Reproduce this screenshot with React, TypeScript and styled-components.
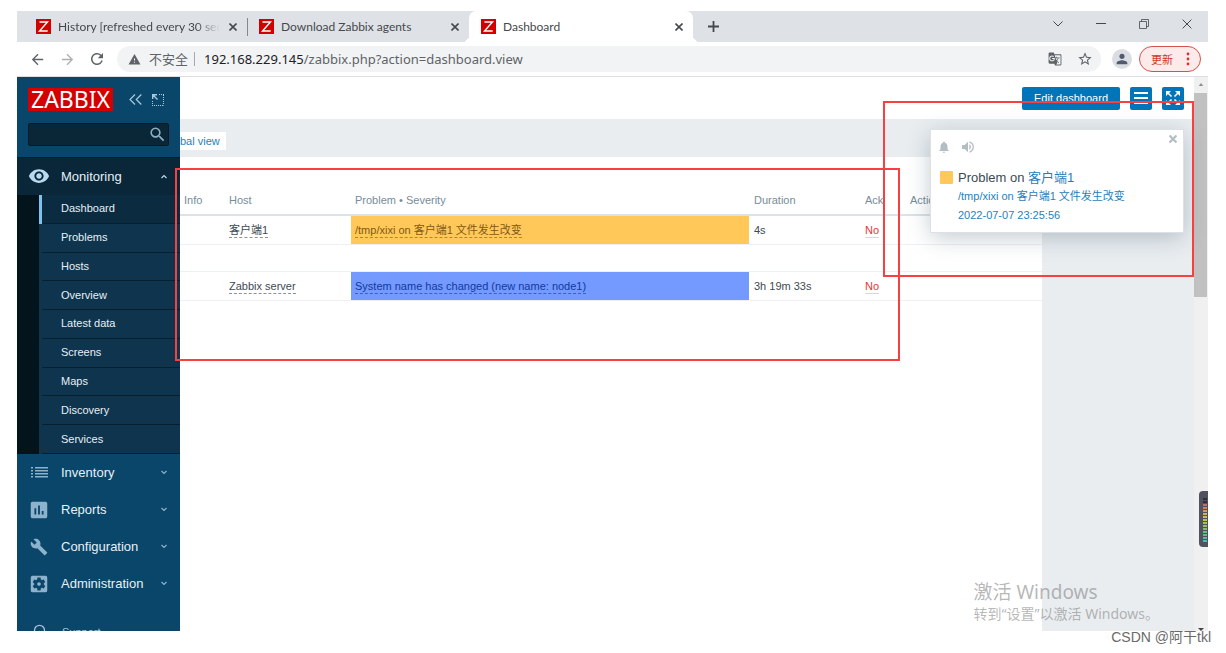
import React from "react";
import styled, { createGlobalStyle, css } from "styled-components";
import {
  MdArrowBack,
  MdArrowForward,
  MdAssessment,
  MdBuild,
  MdGTranslate,
  MdHeadset,
  MdNotifications,
  MdPerson,
  MdRefresh,
  MdSearch,
  MdSettingsApplications,
  MdStarBorder,
  MdVisibility,
  MdVolumeUp,
  MdWarning,
} from "react-icons/md";

const ui = `"Liberation Sans", "Noto Sans CJK SC", sans-serif`;
const chrome = `"Noto Sans", "Noto Sans CJK SC", sans-serif`;
const tabFont = `Lato, "Noto Sans CJK SC", sans-serif`;

const GlobalStyle = createGlobalStyle`
  *, *::before, *::after { box-sizing: border-box; }
  body { margin: 0; background: #fff; font-family: ${ui}; font-size: 11px; color: #3c4a52; }
  button { border: 0; padding: 0; background: none; font: inherit; color: inherit; cursor: pointer; }
  a { color: inherit; text-decoration: none; }
  svg { display: block; flex: none; }
  ul { list-style: none; margin: 0; padding: 0; }
`;

const Page = styled.div`
  position: relative;
  display: flex;
  flex-direction: column;
  height: 100vh;
  padding: 11px 18px 0 17px;
  overflow: hidden;
`;

/* Browser tab strip */
const TabStrip = styled.div`
  display: flex;
  align-items: stretch;
  height: 31px;
  flex: none;
  background: #dee1e6;
  font-family: ${tabFont};
  font-size: 12px;
  color: #45494d;
`;

const Tab = styled.div<{ $active?: boolean; $divider?: boolean }>`
  position: relative;
  display: flex;
  align-items: center;
  gap: 7px;
  width: 222px;
  padding: 0 8px 0 12px;
  ${(p) =>
    p.$active &&
    css`
      width: 224px;
      background: #fff;
      border-radius: 7px 7px 0 0;
      &::before,
      &::after {
        content: "";
        position: absolute;
        bottom: 0;
        width: 7px;
        height: 7px;
      }
      &::before {
        left: -7px;
        background: radial-gradient(circle at 0 0, transparent 7px, #fff 7px);
      }
      &::after {
        right: -7px;
        background: radial-gradient(circle at 100% 0, transparent 7px, #fff 7px);
      }
    `}
  ${(p) =>
    p.$divider &&
    css`
      width: 230px;
      padding-left: 19px;
      &::after {
        content: "";
        position: absolute;
        right: -1px;
        top: 7px;
        width: 1px;
        height: 18px;
        background: #85888c;
      }
    `}
`;

const TabTitle = styled.span<{ $fade?: boolean }>`
  flex: 1;
  overflow: hidden;
  white-space: nowrap;
  line-height: 18px;
  ${(p) => p.$fade && css`mask-image: linear-gradient(to right, #000 85%, transparent);`}
`;

const TabClose = styled.button`
  display: grid;
  place-items: center;
  width: 12px;
  height: 12px;
`;

const NewTab = styled.button`
  display: grid;
  place-items: center;
  width: 40px;
`;

const WindowControls = styled.div`
  display: flex;
  margin-left: auto;
  height: 26px;
`;

const WindowButton = styled.button`
  display: grid;
  place-items: center;
  width: 43px;
`;

/* Address bar */
const Toolbar = styled.div`
  display: flex;
  align-items: center;
  height: 35px;
  flex: none;
  padding: 0 7px 0 12px;
  border-bottom: 1px solid #dcdee1;
  color: #5f6368;
`;

const NavButton = styled.button<{ $dim?: boolean }>`
  display: grid;
  place-items: center;
  width: 30px;
  height: 26px;
  opacity: ${(p) => (p.$dim ? 0.5 : 1)};
  &:first-child {
    width: 16px;
    margin: 0 7px 0 0;
  }
`;

const Omnibox = styled.div`
  display: flex;
  align-items: center;
  flex: 1;
  height: 26px;
  margin-left: 5px;
  padding: 0 1px 0 11px;
  border-radius: 13px;
  background: #f1f3f4;
  font-family: ${chrome};
  font-size: 13px;
`;

const Insecure = styled.span`
  display: flex;
  align-items: center;
  gap: 8px;
  padding-right: 6px;
  border-right: 1px solid #a6a9ac;
  line-height: 14px;
`;

const Address = styled.div`
  flex: 1;
  margin-left: 9px;
  white-space: nowrap;
  outline: none;
  b {
    font-weight: 400;
    color: #202124;
  }
`;

const OmniAction = styled.button`
  display: grid;
  place-items: center;
  width: 30px;
  height: 24px;
`;

const Avatar = styled.button`
  display: grid;
  place-items: center;
  width: 20px;
  height: 20px;
  margin: 0 7px 0 11px;
  border-radius: 50%;
  background: #dadde2;
  color: #515b70;
`;

const UpdateButton = styled.button`
  display: flex;
  align-items: center;
  justify-content: space-between;
  width: 62px;
  height: 26px;
  padding: 0 10px 0 11px;
  border: 1px solid #d5504a;
  border-radius: 13px;
  background: #fcebea;
  color: #d2352d;
  font-size: 11px;
`;

/* Zabbix frame */
const Viewport = styled.div`
  position: relative;
  display: flex;
  flex: 1;
  min-height: 0;
  overflow: hidden;
`;

const Sidebar = styled.aside`
  width: 163px;
  flex: none;
  overflow: hidden;
  background: #0a466a;
  color: #e6f0f6;
`;

const Brand = styled.div`
  display: flex;
  align-items: center;
  padding: 11px 11px 0;
  color: #a9c9dd;
`;

const Logo = styled.a`
  flex: none;
  width: 85px;
  height: 23px;
  margin-right: 16px;
  background: #d40000;
  color: #fff;
  font-family: "Noto Sans", sans-serif;
  font-size: 23px;
  line-height: 23px;
  text-align: center;
`;

const BrandButton = styled.button`
  margin-right: 10px;
`;

const SearchBox = styled.form`
  display: flex;
  align-items: center;
  height: 23px;
  margin: 12px 11px 11px;
  padding-right: 1px;
  border: 1px solid #061a26;
  border-radius: 2px;
  background: #0a2738;
  color: #8fb0c4;
`;

const SearchInput = styled.input`
  flex: 1;
  min-width: 0;
  padding: 0 6px;
  border: 0;
  outline: none;
  background: transparent;
  color: #fff;
  font: inherit;
`;

const MenuHeader = styled.button<{ $open?: boolean }>`
  display: grid;
  grid-template-columns: 44px 1fr 32px;
  align-items: center;
  width: 100%;
  height: ${(p) => (p.$open ? 38 : 37)}px;
  font-size: 13px;
  text-align: left;
  background: ${(p) => (p.$open ? "#092738" : "transparent")};
  box-shadow: ${(p) => (p.$open ? "inset 0 1px 0 #051c2a" : "none")};
  & > svg {
    justify-self: center;
    color: ${(p) => (p.$open ? "#b9d9ee" : "#8db2cb")};
  }
`;

const SubMenu = styled.ul`
  display: grid;
  grid-auto-rows: 1fr;
  height: 259px;
  padding-left: 22px;
  background: #04141d;
`;

const SubLink = styled.a<{ $active?: boolean }>`
  display: flex;
  align-items: center;
  height: 100%;
  padding: 0 0 2px 19px;
  border-left: 3px solid ${(p) => (p.$active ? "#7cc3f2" : "#0f344e")};
  background: ${(p) => (p.$active ? "#0b2b40" : "#0f344e")};
  box-shadow: inset 0 -1px 0 #07202f;
`;

const Support = styled.a`
  display: grid;
  grid-template-columns: 45px 1fr;
  align-items: center;
  margin-top: 22px;
  font-size: 11px;
  color: #a9c6d8;
  & > svg {
    justify-self: center;
  }
`;

const Main = styled.main`
  display: flex;
  flex-direction: column;
  flex: 1;
  min-width: 0;
  background: #e9edf0;
`;

const MainHeader = styled.header`
  display: flex;
  align-items: center;
  justify-content: flex-end;
  gap: 10px;
  height: 42px;
  padding-right: 10px;
  background: #fff;
`;

const BlueButton = styled.button<{ $wide?: boolean }>`
  display: grid;
  place-items: center;
  width: ${(p) => (p.$wide ? 98 : 22)}px;
  height: 23px;
  border-radius: 2px;
  background: #0275b8;
  color: #fff;
`;

const ViewBar = styled.nav`
  display: flex;
  align-items: center;
  height: 38px;
  padding-top: 6px;
`;

const ViewLink = styled.a`
  padding: 0 6px 0 0;
  background: #fff;
  color: #1f7fbd;
  line-height: 18px;
`;

const Widget = styled.section`
  flex: 1;
  margin-right: 152px;
  padding-top: 29px;
  background: #fff;
`;

const ProblemTable = styled.table`
  width: 100%;
  table-layout: fixed;
  border-collapse: separate;
  border-spacing: 0;
`;

const Th = styled.th<{ $w?: number }>`
  width: ${(p) => (p.$w ? `${p.$w}px` : "auto")};
  height: 30px;
  padding: 0 4px;
  border-bottom: 2px solid #dce2e5;
  color: #768d99;
  font-weight: 400;
  text-align: left;
`;

const Td = styled.td<{ $severity?: "warning" | "info" }>`
  height: 29px;
  padding: 0 4px;
  border-bottom: 1px solid #edf1f3;
  ${(p) =>
    p.$severity === "warning" &&
    css`
      background: #ffc859;
      border-right: 1px solid #fff;
      color: #805a10;
    `}
  ${(p) =>
    p.$severity === "info" &&
    css`
      background: #7499ff;
      border-right: 1px solid #fff;
      color: #123a9e;
    `}
`;

const GapCell = styled(Td)`
  height: 27px;
`;

const MenuLink = styled.a`
  display: inline-block;
  line-height: 14px;
  border-bottom: 1px dashed color-mix(in srgb, currentColor 60%, transparent);
`;

const AckLink = styled.a`
  display: inline-block;
  line-height: 14px;
  color: #e33734;
  border-bottom: 1px solid #d3d9dc;
`;

const ScrollTrack = styled.div`
  display: flex;
  flex-direction: column;
  justify-content: space-between;
  width: 14px;
  flex: none;
  background: #f0f0f0;
`;

const ScrollThumb = styled.div`
  width: 13px;
  height: 204px;
  margin-top: 7px;
  background: #c1c1c1;
`;

/* Notification over the dashboard */
const Notice = styled.div`
  position: absolute;
  top: 53px;
  right: 25px;
  width: 252px;
  height: 102px;
  padding: 9px 6px 0 6px;
  background: #fff;
  box-shadow: 0 0 0 1px #dbe1e5, 0 5px 22px rgba(30, 60, 80, 0.28);
`;

const NoticeBar = styled.div`
  display: flex;
  align-items: center;
  gap: 9px;
  color: #b3bec4;
`;

const NoticeClose = styled.button`
  align-self: flex-start;
  margin-left: auto;
  margin-top: -4px;
`;

const NoticeBody = styled.div`
  display: grid;
  grid-template-columns: 13px 1fr;
  column-gap: 5px;
  padding: 14px 0 0 3px;
`;

const Swatch = styled.span`
  width: 13px;
  height: 13px;
  margin-top: 2px;
  border-radius: 1px;
  background: #ffc859;
`;

const NoticeText = styled.div`
  color: #1f7fbd;
  line-height: 19px;
  white-space: nowrap;
  a {
    display: block;
  }
  h4 {
    margin: 0;
    color: #3c4a52;
    font-size: 13px;
    font-weight: 400;
    line-height: 18px;
  }
  h4 a {
    display: inline;
    color: #1f7fbd;
  }
`;

const LevelMeter = styled.div`
  position: absolute;
  right: 0;
  top: 414px;
  width: 9px;
  height: 56px;
  padding: 7px 1px 0 4px;
  border-radius: 4px 0 0 4px;
  background: #50535f;
`;

const Watermark = styled.div`
  position: absolute;
  right: 49px;
  bottom: 7px;
  font-family: ${chrome};
  font-size: 14px;
  line-height: 20px;
  color: rgba(130, 130, 130, 0.58);
  white-space: nowrap;
  strong {
    display: block;
    font-weight: 400;
    font-size: 19px;
    line-height: 24px;
  }
`;

const Marker = styled.div<{ $region: "table" | "notice" }>`
  position: absolute;
  pointer-events: none;
  border: 2px solid #f93f3f;
  ${(p) =>
    p.$region === "table"
      ? css`
          left: 175px;
          right: 326px;
          top: 168px;
          height: 193px;
        `
      : css`
          right: 32px;
          width: 311px;
          top: 101px;
          height: 176px;
        `}
`;

const Credit = styled.footer`
  flex: none;
  height: 22px;
  margin-right: -3px;
  font-size: 14px;
  line-height: 12px;
  text-align: right;
  color: #6a6a6a;
`;

const Favicon = () => (
  <svg width="15" height="15" viewBox="0 0 15 15">
    <rect width="15" height="15" fill="#d40000" />
    <path d="M3.5 3h8L3.5 12h8.2" fill="none" stroke="#fff" strokeWidth="1.4" />
  </svg>
);

const Cross = ({ size = 8, weight = 1.6 }: { size?: number; weight?: number }) => (
  <svg width={size} height={size} viewBox="0 0 8 8" fill="none" stroke="currentColor" strokeWidth={weight}>
    <path d="M.5.5l7 7M7.5.5l-7 7" />
  </svg>
);

const Chevron = ({ up }: { up?: boolean }) => (
  <svg width="6" height="5" viewBox="0 0 6 5" fill="none" stroke="currentColor" strokeWidth="1.2">
    <path d={up ? "M.5 4L3 1.500 5.500 4" : "M.5 1L3 3.500 5.500 1"} />
  </svg>
);

const ListIcon = () => (
  <svg width="17" height="11" viewBox="0 0 17 11" fill="currentColor">
    {[0, 3, 6, 9].map((y) => (
      <path key={y} d={`M0 ${y}h2v1.500H0zM4 ${y}h13v1.500H4z`} />
    ))}
  </svg>
);

const Arrow = ({ down }: { down?: boolean }) => (
  <svg width="14" height="9" viewBox="0 0 14 9">
    <path d={down ? "M4 6h6L7 9z" : "M4 10h6L7 6z"} fill={down ? "#444" : "#8f8f8f"} />
  </svg>
);

const levelColors = [
  "#2e313b", "#2e313b", "#d06a60", "#d4805a", "#d89a54", "#d8b350", "#cfc04e", "#bcc44e",
  "#a6c550", "#92c455", "#7fc262", "#6cc178", "#5bc08e", "#4cc0a4", "#42c0b8",
];

const LevelBars = () => (
  <svg width="4" height="44" viewBox="0 0 4 44">
    {levelColors.map((c, i) => (
      <rect key={i} y={i * 3} width="4" height="2" fill={c} />
    ))}
  </svg>
);

const submenu = ["Dashboard", "Problems", "Hosts", "Overview", "Latest data", "Screens", "Maps", "Discovery", "Services"];

const sections = [
  { label: "Inventory", icon: <ListIcon /> },
  { label: "Reports", icon: <MdAssessment size={22} /> },
  { label: "Configuration", icon: <MdBuild size={18} /> },
  { label: "Administration", icon: <MdSettingsApplications size={22} /> },
];

const tabs = [
  { title: "History [refreshed every 30 sec", divider: true },
  { title: "Download Zabbix agents" },
  { title: "Dashboard", active: true },
];

export default function App() {
  return (
    <Page>
      <GlobalStyle />
      <TabStrip>
        {tabs.map((t) => (
          <Tab key={t.title} $active={t.active} $divider={t.divider}>
            <Favicon />
            <TabTitle $fade={t.divider}>{t.title}</TabTitle>
            <TabClose aria-label="Close tab">
              <Cross />
            </TabClose>
          </Tab>
        ))}
        <NewTab aria-label="New tab">
          <svg width="11" height="11" viewBox="0 0 11 11" stroke="currentColor" strokeWidth="1.8">
            <path d="M5.5 0v11M0 5.5h11" />
          </svg>
        </NewTab>
        <WindowControls>
          <WindowButton aria-label="Search tabs">
            <svg width="10" height="6" viewBox="0 0 10 6" fill="none" stroke="currentColor">
              <path d="M.5.5L5 5 9.5.5" />
            </svg>
          </WindowButton>
          <WindowButton aria-label="Minimize">
            <svg width="10" height="2" viewBox="0 0 10 2" fill="currentColor">
              <path d="M0 0h10v1H0z" />
            </svg>
          </WindowButton>
          <WindowButton aria-label="Restore">
            <svg width="10" height="10" viewBox="0 0 10 10" fill="none" stroke="currentColor">
              <path d="M.5 2.5h7v7h-7zM2.500 2.500v-2h7v7h-2" strokeWidth=".8" />
            </svg>
          </WindowButton>
          <WindowButton aria-label="Close">
            <Cross size={10} weight={0.8} />
          </WindowButton>
        </WindowControls>
      </TabStrip>

      <Toolbar>
        <NavButton aria-label="Back">
          <MdArrowBack size={17} />
        </NavButton>
        <NavButton aria-label="Forward" $dim>
          <MdArrowForward size={17} />
        </NavButton>
        <NavButton aria-label="Reload">
          <MdRefresh size={18} />
        </NavButton>
        <Omnibox>
          <Insecure>
            <MdWarning size={13} />
            不安全
          </Insecure>
          <Address role="textbox" aria-label="Address" contentEditable suppressContentEditableWarning spellCheck={false}>
            <b>192.168.229.145</b>/zabbix.php?action=dashboard.view
          </Address>
          <OmniAction aria-label="Translate">
            <MdGTranslate size={14} />
          </OmniAction>
          <OmniAction aria-label="Bookmark">
            <MdStarBorder size={16} />
          </OmniAction>
        </Omnibox>
        <Avatar aria-label="Profile">
          <MdPerson size={16} />
        </Avatar>
        <UpdateButton>
          更新
          <svg width="4" height="14" viewBox="0 0 4 14" fill="currentColor">
            <circle cx="2" cy="2" r="1.4" />
            <circle cx="2" cy="7" r="1.4" />
            <circle cx="2" cy="12" r="1.4" />
          </svg>
        </UpdateButton>
      </Toolbar>

      <Viewport>
        <Sidebar>
          <Brand>
            <Logo href="#">ZABBIX</Logo>
            <BrandButton aria-label="Collapse sidebar">
              <svg width="13" height="11" viewBox="0 0 13 11" fill="none" stroke="currentColor" strokeWidth="1.2">
                <path d="M6 .5l-5 5 5 5M12.300.5l-5 5 5 5" />
              </svg>
            </BrandButton>
            <BrandButton aria-label="Hide sidebar">
              <svg width="12" height="12" viewBox="0 0 12 12" fill="none" stroke="currentColor">
                <path d="M7 .5h5M11.5 1v10.500M.5 7v4.500M0 11.500h12" strokeDasharray="1 1" />
                <path d="M.7 5V.7H5M1 1l4.500 4.500" strokeWidth="1.4" />
              </svg>
            </BrandButton>
          </Brand>
          <SearchBox role="search">
            <SearchInput type="text" aria-label="Search" />
            <MdSearch size={19} />
          </SearchBox>
          <MenuHeader $open>
            <MdVisibility size={22} />
            <span>Monitoring</span>
            <Chevron up />
          </MenuHeader>
          <SubMenu>
            {submenu.map((label, i) => (
              <li key={label}>
                <SubLink href="#" $active={i === 0}>
                  {label}
                </SubLink>
              </li>
            ))}
          </SubMenu>
          {sections.map((s) => (
            <MenuHeader key={s.label}>
              {s.icon}
              <span>{s.label}</span>
              <Chevron />
            </MenuHeader>
          ))}
          <Support href="#">
            <MdHeadset size={15} />
            <span>Support</span>
          </Support>
        </Sidebar>

        <Main>
          <MainHeader>
            <BlueButton $wide>Edit dashboard</BlueButton>
            <BlueButton aria-label="Actions">
              <svg width="14" height="12" viewBox="0 0 14 12" fill="currentColor">
                <path d="M0 0h14v2H0zM0 5h14v2H0zM0 10h14v2H0z" />
              </svg>
            </BlueButton>
            <BlueButton aria-label="Fullscreen">
              <svg width="14" height="14" viewBox="0 0 14 14" fill="currentColor" stroke="currentColor" strokeWidth="1.6">
                <path stroke="none" d="M0 0h5L0 5zM14 0v5L9 0zM0 14V9l5 5zM14 14H9l5-5z" />
                <path d="M1.5 1.5l4 4M12.5 1.5l-4 4M1.5 12.5l4-4M12.5 12.5l-4-4" />
              </svg>
            </BlueButton>
          </MainHeader>
          <ViewBar>
            <ViewLink href="#">bal view</ViewLink>
          </ViewBar>
          <Widget>
            <ProblemTable>
              <thead>
                <tr>
                  <Th $w={45}>Info</Th>
                  <Th $w={126}>Host</Th>
                  <Th>Problem • Severity</Th>
                  <Th $w={111}>Duration</Th>
                  <Th $w={45}>Ack</Th>
                  <Th $w={136}>Actions</Th>
                </tr>
              </thead>
              <tbody>
                <tr>
                  <Td />
                  <Td>
                    <MenuLink href="#">客户端1</MenuLink>
                  </Td>
                  <Td $severity="warning">
                    <MenuLink href="#">/tmp/xixi on 客户端1 文件发生改变</MenuLink>
                  </Td>
                  <Td>4s</Td>
                  <Td>
                    <AckLink href="#">No</AckLink>
                  </Td>
                  <Td />
                </tr>
                <tr>
                  <GapCell colSpan={6} />
                </tr>
                <tr>
                  <Td />
                  <Td>
                    <MenuLink href="#">Zabbix server</MenuLink>
                  </Td>
                  <Td $severity="info">
                    <MenuLink href="#">System name has changed (new name: node1)</MenuLink>
                  </Td>
                  <Td>3h 19m 33s</Td>
                  <Td>
                    <AckLink href="#">No</AckLink>
                  </Td>
                  <Td />
                </tr>
              </tbody>
            </ProblemTable>
          </Widget>
        </Main>

        <ScrollTrack>
          <div>
            <Arrow />
            <ScrollThumb />
          </div>
          <Arrow down />
        </ScrollTrack>

        <Notice role="alert">
          <NoticeBar>
            <button aria-label="Snooze">
              <MdNotifications size={14} />
            </button>
            <button aria-label="Mute">
              <MdVolumeUp size={16} />
            </button>
            <NoticeClose aria-label="Close notification">
              <Cross weight={2.2} />
            </NoticeClose>
          </NoticeBar>
          <NoticeBody>
            <Swatch />
            <NoticeText>
              <h4>
                Problem on <a href="#">客户端1</a>
              </h4>
              <a href="#">/tmp/xixi on 客户端1 文件发生改变</a>
              <a href="#">2022-07-07 23:25:56</a>
            </NoticeText>
          </NoticeBody>
        </Notice>

        <LevelMeter>
          <LevelBars />
        </LevelMeter>

        <Watermark>
          <strong>激活 Windows</strong>
          转到“设置”以激活 Windows。
        </Watermark>
      </Viewport>

      <Credit>CSDN @阿干tkl</Credit>
      <Marker $region="table" />
      <Marker $region="notice" />
    </Page>
  );
}
